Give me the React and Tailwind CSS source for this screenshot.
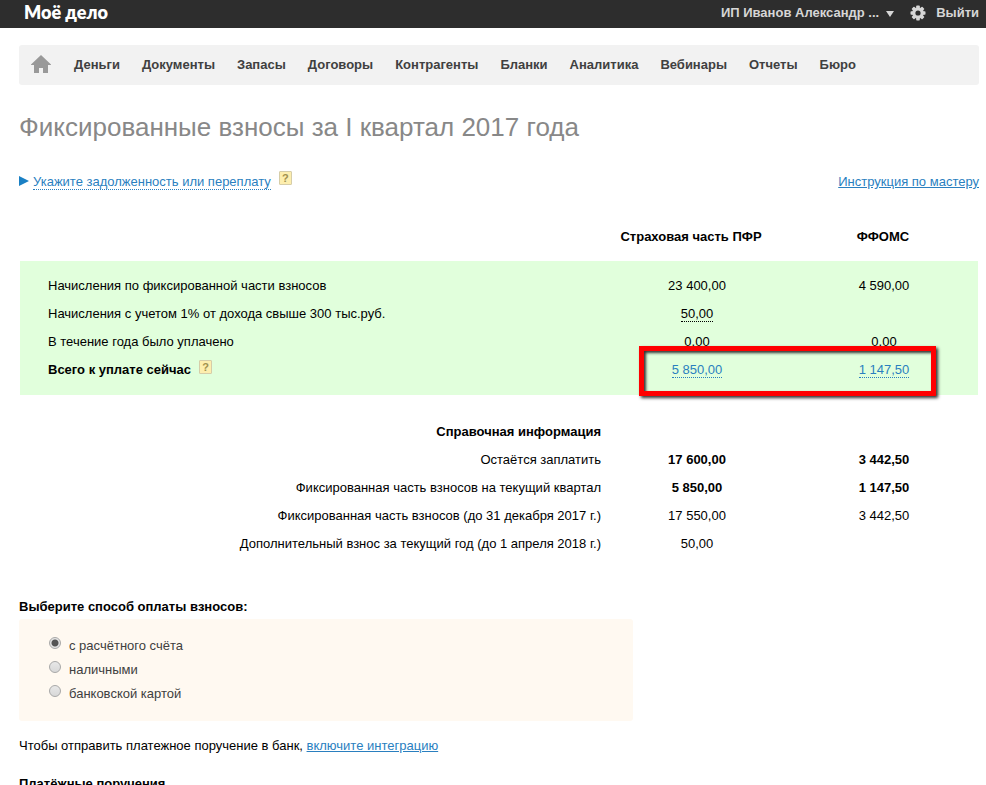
import React, { useState } from "react";

const navItems = ["Деньги", "Документы", "Запасы", "Договоры", "Контрагенты", "Бланки", "Аналитика", "Вебинары", "Отчеты", "Бюро"];

const infoRows = [
  { label: "Остаётся заплатить", pfr: "17 600,00", ffoms: "3 442,50", strong: true },
  { label: "Фиксированная часть взносов на текущий квартал", pfr: "5 850,00", ffoms: "1 147,50", strong: true },
  { label: "Фиксированная часть взносов (до 31 декабря 2017 г.)", pfr: "17 550,00", ffoms: "3 442,50" },
  { label: "Дополнительный взнос за текущий год (до 1 апреля 2018 г.)", pfr: "50,00", ffoms: "" },
];

const payMethods = [
  { id: "account", label: "с расчётного счёта" },
  { id: "cash", label: "наличными" },
  { id: "card", label: "банковской картой" },
];

function Help() {
  return (
    <button
      type="button"
      aria-label="Справка"
      className="flex h-[14px] w-[13px] shrink-0 items-center justify-center rounded-[1px] border border-[#d6cda8] bg-[#fdeeae] text-[11px] leading-3 font-bold text-[#a1914f]"
    >
      ?
    </button>
  );
}

function GearIcon() {
  return (
    <svg viewBox="0 0 16 16" className="size-4" aria-hidden="true">
      <g fill="#d6d6d6">
        <rect x="6.2" y="0.5" width="3.6" height="15" rx="0.8" />
        <rect x="6.2" y="0.5" width="3.6" height="15" rx="0.8" transform="rotate(45 8 8)" />
        <rect x="6.2" y="0.5" width="3.6" height="15" rx="0.8" transform="rotate(90 8 8)" />
        <rect x="6.2" y="0.5" width="3.6" height="15" rx="0.8" transform="rotate(135 8 8)" />
        <circle cx="8" cy="8" r="5.8" />
      </g>
      <circle cx="8" cy="8" r="2.6" fill="#2d2d2d" />
    </svg>
  );
}

function HomeIcon() {
  return (
    <svg viewBox="0 0 20 18" className="h-[18px] w-5" aria-hidden="true">
      <path d="M10 0 L20 9.5 V10 H17 V18 H12 V13 H8 V18 H3 V10 H0 V9.5 Z" fill="#999999" />
    </svg>
  );
}

export default function App() {
  const [method, setMethod] = useState("account");

  return (
    <div className="h-screen overflow-hidden bg-white font-['Liberation_Sans',Arial,sans-serif] text-[13px] leading-5 text-black">
      <header className="flex h-7 items-center justify-between bg-[#2d2d2d] pr-[7px] pl-6 font-bold text-[#d6d6d6]">
        <a href="#" className="pb-1 font-['Lato',sans-serif] text-[18px] leading-6 font-extrabold text-white">Моё дело</a>
        <div className="flex items-center pb-0.5">
          <button type="button" className="flex cursor-pointer items-center gap-[7px]">
            ИП Иванов Александр ...
            <svg viewBox="0 0 8 6" className="mt-0.5 h-1.5 w-2" aria-hidden="true">
              <path d="M0 0 H8 L4 6 Z" fill="#d6d6d6" />
            </svg>
          </button>
          <button type="button" aria-label="Настройки" className="mr-[10px] ml-4 cursor-pointer">
            <GearIcon />
          </button>
          <a href="#">Выйти</a>
        </div>
      </header>

      <main className="pt-[17px] pr-[7px] pl-[19px]">
        <nav className="flex h-10 items-center gap-[22px] rounded-[3px] bg-[#f2f2f2] px-3 font-bold text-[#404040]">
          <a href="#" aria-label="Главная" className="mr-px pb-0.5"><HomeIcon /></a>
          {navItems.map((item) => (
            <a key={item} href="#">{item}</a>
          ))}
        </nav>

        <h1 className="mt-[26px] text-[26px] leading-8 text-[#888888]">Фиксированные взносы за I квартал 2017 года</h1>

        <div className="mt-7 flex items-start justify-between text-[#2a7fbf]">
          <div className="flex items-start">
            <svg viewBox="0 0 10 10" className="mt-[5px] mr-1 size-[10px]" aria-hidden="true">
              <path d="M0 0 L10 5 L0 10 Z" fill="#1a80c4" />
            </svg>
            <button type="button" className="mt-px mr-2 h-[18px] cursor-pointer border-b border-dotted border-[#2a7fbf]">
              Укажите задолженность или переплату
            </button>
            <Help />
          </div>
          <a href="#" className="pt-px underline">Инструкция по мастеру</a>
        </div>

        <div className="px-px pt-[30px]">
          <table className="w-full table-fixed border-collapse text-center [&_td]:h-7 [&_td]:py-1">
            <colgroup>
              <col />
              <col className="w-[190px]" />
              <col className="w-[186px]" />
            </colgroup>
            <thead>
              <tr>
                <td></td>
                <th className="pt-[5px] pr-3 pb-[14px]">Страховая часть ПФР</th>
                <th className="pt-[5px] pr-1 pb-[14px]">ФФОМС</th>
              </tr>
            </thead>
            <tbody className="bg-[#e1ffdc] [&_td:first-child]:pl-7 [&_td:first-child]:text-left [&_td:last-child]:pr-0.5 [&_tr:first-child>td]:pt-[15px] [&_tr:last-child>td]:pb-[15px]">
              <tr>
                <td>Начисления по фиксированной части взносов</td>
                <td>23 400,00</td>
                <td>4 590,00</td>
              </tr>
              <tr>
                <td>Начисления с учетом 1% от дохода свыше 300 тыс.руб.</td>
                <td><button type="button" className="h-[18px] cursor-pointer border-b border-dotted border-black align-top">50,00</button></td>
                <td></td>
              </tr>
              <tr>
                <td>В течение года было уплачено</td>
                <td>0,00</td>
                <td>0,00</td>
              </tr>
              <tr className="text-[#2a7fbf]">
                <td>
                  <div className="flex items-start gap-2 font-bold text-black">
                    Всего к уплате сейчас
                    <Help />
                  </div>
                </td>
                <td className="relative">
                  <button type="button" className="h-[18px] cursor-pointer border-b border-dotted border-[#2a7fbf] align-top">5 850,00</button>
                  <div className="pointer-events-none absolute -top-[10px] left-[37px] h-[50px] w-[297px] border-[5px] border-[#ff0000] shadow-[2px_2px_3px_#333333,inset_2px_2px_3px_#333333]" />
                </td>
                <td>
                  <button type="button" className="h-[18px] cursor-pointer border-b border-dotted border-[#2a7fbf] align-top">1 147,50</button>
                </td>
              </tr>
            </tbody>
            <tbody className="[&_td:last-child]:pr-0.5">
              <tr>
                <th className="pt-[27px] pr-px pb-1 text-right">Справочная информация</th>
                <td></td>
                <td></td>
              </tr>
              {infoRows.map((row) => (
                <tr key={row.label}>
                  <td className="pr-px text-right">{row.label}</td>
                  <td className={row.strong ? "font-bold" : ""}>{row.pfr}</td>
                  <td className={row.strong ? "font-bold" : ""}>{row.ffoms}</td>
                </tr>
              ))}
            </tbody>
          </table>
        </div>

        <fieldset className="mt-[39px]">
          <legend className="font-bold">Выберите способ оплаты взносов:</legend>
          <div className="mt-0.5 w-[64%] rounded-[3px] bg-[#fff9f1] pt-[14px] pb-4 pl-[30px] text-[#404040]">
            {payMethods.map(({ id, label }) => (
              <div key={id} className="flex h-6 items-start">
                <input
                  type="radio"
                  id={id}
                  name="method"
                  checked={method === id}
                  onChange={() => setMethod(id)}
                  className="mt-1 mr-2 size-3 appearance-none rounded-full border border-[#a8a8a8] bg-linear-to-b from-[#e8e8e8] to-[#d8d8d8] checked:bg-[radial-gradient(circle,#555555_0,#555555_3px,#e4e4e4_4px)]"
                />
                <label htmlFor={id} className="pt-px leading-6">{label}</label>
              </div>
            ))}
          </div>
        </fieldset>

        <p className="mt-[15px]">
          Чтобы отправить платежное поручение в банк, <a href="#" className="text-[#2a7fbf] underline">включите интеграцию</a>
        </p>
        <h2 className="mt-[18px] font-bold">Платёжные поручения</h2>
      </main>
    </div>
  );
}
